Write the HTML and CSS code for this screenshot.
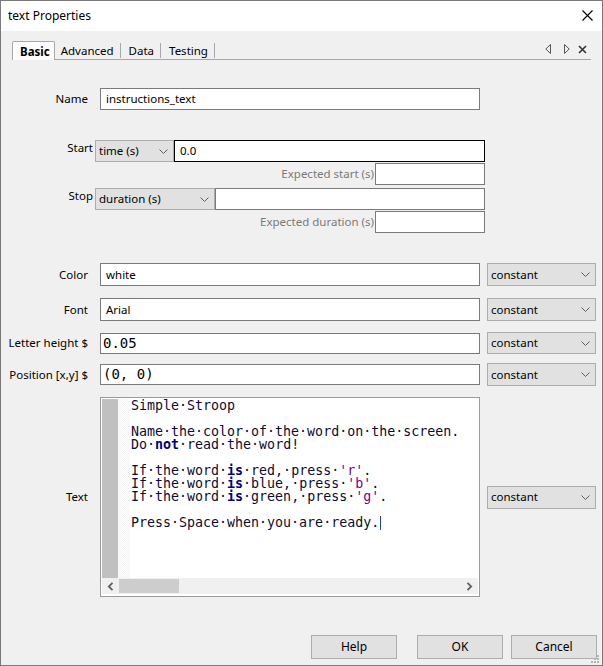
FILE: index.html
```html
<!DOCTYPE html>
<html>
<head>
<meta charset="utf-8">
<link rel="stylesheet" href="styles.css">
</head>
<body>
<div class="window">
  <div class="titlebar">
    <span class="title">text Properties</span>
    <svg class="close" width="11" height="11" viewBox="0 0 11 11"><path d="M0.5 0.5 L10.5 10.5 M10.5 0.5 L0.5 10.5" stroke="#000" stroke-width="1.1" fill="none"/></svg>
  </div>
  <div class="content">
    <div class="tabbar">
      <div class="tabs">
        <div class="tab active">Basic</div>
        <div class="tab">Advanced</div><span class="sep"></span>
        <div class="tab">Data</div><span class="sep"></span>
        <div class="tab">Testing</div><span class="sep"></span>
      </div>
      <div class="tabnav">
        <svg width="6" height="10" viewBox="0 0 6 10"><path d="M5.5 0.5 L0.8 5 L5.5 9.5 Z" fill="none" stroke="#555" stroke-width="1"/></svg>
        <svg class="nav-r" width="6" height="10" viewBox="0 0 6 10"><path d="M0.5 0.5 L5.2 5 L0.5 9.5 Z" fill="none" stroke="#555" stroke-width="1"/></svg>
        <svg class="nav-x" width="9" height="9" viewBox="0 0 9 9"><path d="M1 1 L8 8 M8 1 L1 8" stroke="#333" stroke-width="1.6" fill="none"/></svg>
      </div>
    </div>

    <div class="row row-name">
      <label class="lbl">Name</label>
      <div class="input">instructions_text</div>
    </div>

    <div class="timing">
      <div class="trow">
        <label class="tlbl">Start</label>
        <div class="select sel-start"><span>time (s)</span><svg class="chev" width="9" height="5" viewBox="0 0 9 5"><path d="M0.5 0.5 L4.5 4.5 L8.5 0.5" fill="none" stroke="#606060"/></svg></div>
        <div class="input input-focus w-start">0.0</div>
      </div>
      <div class="erow">
        <label class="elbl">Expected start (s)</label>
        <div class="input w-exp"></div>
      </div>
      <div class="trow row-stop">
        <label class="tlbl">Stop</label>
        <div class="select sel-stop"><span>duration (s)</span><svg class="chev" width="9" height="5" viewBox="0 0 9 5"><path d="M0.5 0.5 L4.5 4.5 L8.5 0.5" fill="none" stroke="#606060"/></svg></div>
        <div class="input w-stop"></div>
      </div>
      <div class="erow">
        <label class="elbl">Expected duration (s)</label>
        <div class="input w-exp"></div>
      </div>
    </div>

    <div class="row row-color">
      <label class="lbl">Color</label>
      <div class="input">white</div>
      <div class="select sel-const"><span>constant</span><svg class="chev" width="9" height="5" viewBox="0 0 9 5"><path d="M0.5 0.5 L4.5 4.5 L8.5 0.5" fill="none" stroke="#606060"/></svg></div>
    </div>

    <div class="row row-font">
      <label class="lbl">Font</label>
      <div class="input">Arial</div>
      <div class="select sel-const"><span>constant</span><svg class="chev" width="9" height="5" viewBox="0 0 9 5"><path d="M0.5 0.5 L4.5 4.5 L8.5 0.5" fill="none" stroke="#606060"/></svg></div>
    </div>

    <div class="row row-height">
      <label class="lbl">Letter height $</label>
      <div class="input mono short">0.05</div>
      <div class="select sel-const sel-22"><span>constant</span><svg class="chev" width="9" height="5" viewBox="0 0 9 5"><path d="M0.5 0.5 L4.5 4.5 L8.5 0.5" fill="none" stroke="#606060"/></svg></div>
    </div>

    <div class="row row-pos">
      <label class="lbl">Position [x,y] $</label>
      <div class="input mono short">(0, 0)</div>
      <div class="select sel-const"><span>constant</span><svg class="chev" width="9" height="5" viewBox="0 0 9 5"><path d="M0.5 0.5 L4.5 4.5 L8.5 0.5" fill="none" stroke="#606060"/></svg></div>
    </div>

    <div class="row row-text">
      <label class="lbl">Text</label>
      <div class="editor">
        <div class="edit-main">
          <div class="gutter"></div>
          <div class="fold"></div>
          <div class="code">
            <div class="ln">Simple·Stroop</div>
            <div class="ln"></div>
            <div class="ln">Name·the·color·of·the·word·on·the·screen.</div>
            <div class="ln">Do·<b class="kw">not</b>·read·the·word!</div>
            <div class="ln"></div>
            <div class="ln">If·the·word·<b class="kw">is</b>·red,·press·<span class="str">'r'</span>.</div>
            <div class="ln">If·the·word·<b class="kw">is</b>·blue,·press·<span class="str">'b'</span>.</div>
            <div class="ln">If·the·word·<b class="kw">is</b>·green,·press·<span class="str">'g'</span>.</div>
            <div class="ln"></div>
            <div class="ln">Press·Space·when·you·are·ready.<span class="caret"></span></div>
          </div>
        </div>
        <div class="hscroll">
          <div class="arrow"><svg width="7" height="9" viewBox="0 0 7 9"><path d="M5.5 0.8 L1.8 4.5 L5.5 8.2" fill="none" stroke="#606060" stroke-width="1.8"/></svg></div>
          <div class="thumb"></div>
          <div class="track"></div>
          <div class="arrow"><svg width="7" height="9" viewBox="0 0 7 9"><path d="M1.5 0.8 L5.2 4.5 L1.5 8.2" fill="none" stroke="#606060" stroke-width="1.8"/></svg></div>
        </div>
      </div>
      <div class="select sel-const"><span>constant</span><svg class="chev" width="9" height="5" viewBox="0 0 9 5"><path d="M0.5 0.5 L4.5 4.5 L8.5 0.5" fill="none" stroke="#606060"/></svg></div>
    </div>

    <div class="buttons">
      <div class="btn">Help</div>
      <div class="btn btn-ok">OK</div>
      <div class="btn">Cancel</div>
    </div>
    <svg class="grip" width="8" height="8" viewBox="0 0 8 8">
      <rect x="6" y="0" width="2" height="2" fill="#b4b4b4"/>
      <rect x="3" y="3" width="2" height="2" fill="#b4b4b4"/>
      <rect x="6" y="3" width="2" height="2" fill="#b4b4b4"/>
      <rect x="0" y="6" width="2" height="2" fill="#b4b4b4"/>
      <rect x="3" y="6" width="2" height="2" fill="#b4b4b4"/>
      <rect x="6" y="6" width="2" height="2" fill="#b4b4b4"/>
    </svg>
  </div>
</div>
</body>
</html>
```
FILE: styles.css
```css
* { box-sizing: border-box; }
html, body { margin: 0; padding: 0; background: #f0f0f0; }
body {
  font-family: "Noto Sans", "Open Sans", sans-serif;
  font-size: 11.5px;
  color: #000;
}
.window {
  width: 603px;
  height: 666px;
  border: 1px solid #7a7a7a;
  background: #f0f0f0;
  display: flex;
  flex-direction: column;
  position: relative;
}
.titlebar {
  height: 30px;
  background: #fff;
  display: flex;
  align-items: center;
  padding-left: 7px;
  position: relative;
}
.title { font-size: 12px; line-height: 16px; }
.close { position: absolute; left: 581px; top: 9px; }

.content { flex: 1; position: relative; }

.tabbar {
  height: 29px;
  margin: 0 11px 0 11px;
  border-bottom: 1px solid #a8a8a8;
  display: flex;
  align-items: flex-end;
  justify-content: space-between;
}
.tabs { display: flex; align-items: flex-end; }
.tab {
  height: 18px;
  padding: 2px 6px 0 6px;
  line-height: 16px;
}
.tab.active {
  height: 19px;
  margin-bottom: -1px;
  background: #fdfdfd;
  border: 1px solid #a8a8a8;
  border-bottom: none;
  border-radius: 2px 2px 0 0;
  font-weight: bold;
  padding: 2px 4px 0 7px;
}
.sep { width: 1px; height: 15px; background: #a8a8a8; margin-bottom: 1px; margin-right: 2px; }
.tabnav {
  display: flex;
  align-items: center;
  height: 10px;
  margin-bottom: 5px;
  padding-right: 4px;
}
.nav-r { margin-left: 13px; }
.nav-x { margin-left: 8px; }

.row { display: flex; align-items: center; }
.lbl { width: 87px; margin-right: 12px; text-align: right; line-height: 16px; }
.input {
  width: 380px;
  height: 22px;
  background: #fff;
  border: 1px solid #7a7a7a;
  padding: 0 5px;
  line-height: 20px;
  white-space: nowrap;
  overflow: hidden;
}
.input-focus { border-color: #000; }
.mono {
  font-family: "DejaVu Sans Mono", "Liberation Mono", monospace;
  font-size: 14px;
  padding: 0 2px;
  line-height: 18px;
}
.short { height: 21px; }
.row-name { margin-top: 28px; }

.timing { margin-top: 30px; }
.trow { display: flex; align-items: flex-start; }
.tlbl { width: 92px; margin-right: 2px; text-align: right; line-height: 16px; }
.select {
  height: 22px;
  background: #e1e1e1;
  border: 1px solid #adadad;
  display: flex;
  align-items: center;
  justify-content: space-between;
  padding: 0 5px 0 3px;
  line-height: 16px;
  white-space: nowrap;
}
.sel-start { width: 79px; }
.sel-stop { width: 120px; }
.w-start { width: 311px; }
.w-stop { width: 270px; }
.w-exp { width: 110px; }
.erow { display: flex; align-items: center; margin-top: 1px; height: 22px; }
.elbl { width: 374px; text-align: right; color: #7a7a7a; line-height: 16px; padding-right: 1px; }
.row-stop { margin-top: 3px; }

.sel-const { width: 109px; height: 23px; margin-left: 7px; }
.sel-22 { height: 22px; }
.row-color { margin-top: 30px; }
.row-color .input, .row-font .input { height: 23px; line-height: 21px; }
.row-font { margin-top: 12px; }
.row-height { margin-top: 11px; }
.row-pos { margin-top: 9px; }
.row-text { margin-top: 11px; }

.editor {
  width: 380px;
  height: 200px;
  border: 1px solid #9a9a9a;
  padding: 1px;
  background: #fff;
  display: flex;
  flex-direction: column;
}
.edit-main { flex: 1; display: flex; min-height: 0; }
.gutter { width: 16px; background: #c0c0c0; }
.fold {
  width: 12px;
  background: repeating-conic-gradient(#f2f2f2 0 25%, #fff 0 50%) 0 0 / 2px 2px;
}
.code {
  flex: 1;
  padding: 0 0 0 1px;
  font-family: "DejaVu Sans Mono", "Liberation Mono", monospace;
  font-size: 13.3px;
  line-height: 13px;
  color: #0c0c30;
  overflow: hidden;
}
.ln { height: 13px; white-space: pre; }
.kw { color: #00007f; font-weight: bold; }
.str { color: #7f007f; }
.caret {
  display: inline-block;
  width: 1px;
  height: 14px;
  background: #2040c0;
  vertical-align: -3px;
  margin-left: 1px;
}
.hscroll {
  height: 16px;
  margin-bottom: 1px;
  background: #f0f0f0;
  display: flex;
  align-items: stretch;
}
.arrow { width: 17px; display: flex; align-items: center; justify-content: center; }
.thumb { width: 60px; background: #cdcdcd; margin: 1px 0; }
.track { flex: 1; }

.buttons {
  margin-top: 38px;
  display: flex;
  justify-content: flex-end;
  padding-right: 5px;
}
.btn {
  width: 86px;
  height: 24px;
  background: #e1e1e1;
  border: 1px solid #adadad;
  text-align: center;
  line-height: 21px;
  font-size: 12px;
  margin-left: 8px;
}
.btn-ok { margin-left: 20px; }
.grip { position: absolute; right: 3px; bottom: 2px; }
```
